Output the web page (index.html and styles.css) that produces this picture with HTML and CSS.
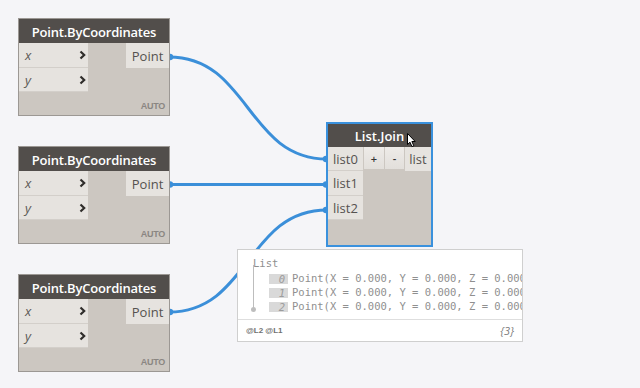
FILE: index.html
```html
<!DOCTYPE html>
<html>
<head>
<meta charset="utf-8">
<link rel="stylesheet" href="styles.css">
</head>
<body>
<div class="canvas">
  <svg class="wires" width="640" height="388" viewBox="0 0 640 388">
    <g fill="none" stroke="#3b8fd9" stroke-width="3">
      <path d="M169 57 C249 57 247 159 327 159"/>
      <path d="M169 184.5 L327 184.5"/>
      <path d="M169 312 C249 312 247 210 327 210"/>
    </g>
    <g fill="#3b8fd9">
      <circle cx="170" cy="57" r="3.2"/>
      <circle cx="170" cy="184.5" r="3.2"/>
      <circle cx="170" cy="312" r="3.2"/>
      <circle cx="326" cy="159" r="3.2"/>
      <circle cx="326" cy="184.5" r="3.2"/>
      <circle cx="326" cy="210" r="3.2"/>
    </g>
  </svg>

  <div class="node n1">
    <div class="head">Point.ByCoordinates</div>
    <div class="body">
      <div class="inputs">
        <div class="in"><span>x</span><svg class="chev" width="7" height="10" viewBox="0 0 7 10"><path d="M1.5 1.5 L5.2 5 L1.5 8.5" fill="none" stroke="#2f2d2b" stroke-width="2.2"/></svg></div>
        <div class="in"><span>y</span><svg class="chev" width="7" height="10" viewBox="0 0 7 10"><path d="M1.5 1.5 L5.2 5 L1.5 8.5" fill="none" stroke="#2f2d2b" stroke-width="2.2"/></svg></div>
      </div>
      <div class="outputs">
        <div class="out">Point</div>
        <div class="auto">AUTO</div>
      </div>
    </div>
  </div>

  <div class="node n2">
    <div class="head">Point.ByCoordinates</div>
    <div class="body">
      <div class="inputs">
        <div class="in"><span>x</span><svg class="chev" width="7" height="10" viewBox="0 0 7 10"><path d="M1.5 1.5 L5.2 5 L1.5 8.5" fill="none" stroke="#2f2d2b" stroke-width="2.2"/></svg></div>
        <div class="in"><span>y</span><svg class="chev" width="7" height="10" viewBox="0 0 7 10"><path d="M1.5 1.5 L5.2 5 L1.5 8.5" fill="none" stroke="#2f2d2b" stroke-width="2.2"/></svg></div>
      </div>
      <div class="outputs">
        <div class="out">Point</div>
        <div class="auto">AUTO</div>
      </div>
    </div>
  </div>

  <div class="node n3">
    <div class="head">Point.ByCoordinates</div>
    <div class="body">
      <div class="inputs">
        <div class="in"><span>x</span><svg class="chev" width="7" height="10" viewBox="0 0 7 10"><path d="M1.5 1.5 L5.2 5 L1.5 8.5" fill="none" stroke="#2f2d2b" stroke-width="2.2"/></svg></div>
        <div class="in"><span>y</span><svg class="chev" width="7" height="10" viewBox="0 0 7 10"><path d="M1.5 1.5 L5.2 5 L1.5 8.5" fill="none" stroke="#2f2d2b" stroke-width="2.2"/></svg></div>
      </div>
      <div class="outputs">
        <div class="out">Point</div>
        <div class="auto">AUTO</div>
      </div>
    </div>
  </div>

  <div class="join">
    <div class="jhead">List.Join</div>
    <div class="jbody">
      <div class="jinputs">
        <div class="jin r0">list0</div>
        <div class="jin r1">list1</div>
        <div class="jin r2">list2</div>
      </div>
      <div class="jbtns">
        <div class="btn plus">+</div>
        <div class="btn minus">-</div>
      </div>
      <div class="jout">list</div>
    </div>
  </div>

  <div class="preview">
    <div class="pv-main">
      <div class="pv-title">List</div>
      <div class="tree">
        <div class="row"><span class="idx">0</span>Point(X = 0.000, Y = 0.000, Z = 0.000)</div>
        <div class="row"><span class="idx">1</span>Point(X = 0.000, Y = 0.000, Z = 0.000)</div>
        <div class="row"><span class="idx">2</span>Point(X = 0.000, Y = 0.000, Z = 0.000)</div>
      </div>
    </div>
    <div class="pv-foot">
      <span class="levels">@L2 @L1</span>
      <span class="count">{3}</span>
    </div>
  </div>

  <svg class="cursor" width="10" height="15" viewBox="0 0 10 15">
    <path d="M0.5 0.5 L0.5 11.5 L3 9.2 L4.9 13.6 L6.8 12.8 L4.9 8.5 L8.2 8.5 Z" fill="#fff" stroke="#000" stroke-width="1" stroke-linejoin="round"/>
  </svg>
</div>
</body>
</html>
```
FILE: styles.css
```css
html, body {
  margin: 0;
  padding: 0;
}
body {
  background: #f5f5f8;
  font-family: "Open Sans", "DejaVu Sans", sans-serif;
}
.canvas {
  position: relative;
  width: 640px;
  height: 388px;
  overflow: hidden;
  background: #f5f5f8;
}
.wires {
  position: absolute;
  left: 0;
  top: 0;
}

/* Point.ByCoordinates nodes */
.node {
  position: absolute;
  left: 18px;
  width: 152px;
  height: 98px;
  box-sizing: border-box;
  border: 1px solid #9c9894;
  background: #ccc7c1;
  display: flex;
  flex-direction: column;
}
.n1 { top: 18px; }
.n2 { top: 146px; }
.n3 { top: 274px; }
.head {
  height: 24px;
  background: #524e4b;
  color: #fff;
  font-size: 13px;
  font-weight: 600;
  letter-spacing: -0.2px;
  display: flex;
  align-items: center;
  justify-content: center;
  padding-top: 1px;
  box-sizing: border-box;
}
.body {
  flex: 1;
  display: flex;
}
.inputs {
  width: 69px;
  display: flex;
  flex-direction: column;
}
.in {
  height: 24px;
  box-sizing: border-box;
  background: #e6e3df;
  border-bottom: 1px solid #d3cfca;
  display: flex;
  align-items: center;
  justify-content: space-between;
  padding: 0 2px 0 6px;
  font-size: 13px;
  font-style: italic;
  color: #5a5754;
}
.in:first-child { height: 25px; }
.chev { display: block; }
.outputs {
  flex: 1;
  display: flex;
  flex-direction: column;
  align-items: flex-end;
}
.out {
  width: 43px;
  height: 25px;
  background: #e6e3df;
  display: flex;
  align-items: center;
  justify-content: center;
  font-size: 13px;
  color: #555250;
}
.auto {
  margin-top: auto;
  margin-bottom: 4px;
  margin-right: 4px;
  font-size: 9px;
  font-weight: 700;
  letter-spacing: -0.3px;
  color: #8a8682;
  font-family: "Liberation Sans", sans-serif;
}

/* List.Join node */
.join {
  position: absolute;
  left: 326px;
  top: 122px;
  width: 107px;
  height: 125px;
  box-sizing: border-box;
  border: 2px solid #3a91dd;
  background: #ccc7c1;
  display: flex;
  flex-direction: column;
}
.jhead {
  height: 23px;
  background: #524e4b;
  color: #fff;
  font-size: 13px;
  font-weight: 600;
  display: flex;
  align-items: center;
  justify-content: center;
}
.jbody {
  flex: 1;
  display: flex;
  align-items: flex-start;
}
.jinputs {
  width: 35px;
  display: flex;
  flex-direction: column;
}
.jin {
  height: 24px;
  box-sizing: border-box;
  background: #e6e3df;
  border-bottom: 1px solid #d3cfca;
  display: flex;
  align-items: center;
  padding-left: 5px;
  font-size: 13px;
  color: #555250;
}
.jin.r1 { height: 25px; }
.jbtns {
  display: flex;
  gap: 1px;
  margin-left: 1px;
}
.btn {
  width: 19px;
  height: 22px;
  background: linear-gradient(#eeebe8, #e2dfdb);
  display: flex;
  align-items: center;
  justify-content: center;
  font-size: 11px;
  font-weight: 600;
  color: #333;
}
.plus { width: 20px; }
.jout {
  margin-left: 1px;
  flex: 1;
  height: 24px;
  background: #e6e3df;
  display: flex;
  align-items: center;
  justify-content: center;
  font-size: 13px;
  color: #555250;
}

/* Preview bubble */
.preview {
  position: absolute;
  left: 237px;
  top: 249px;
  width: 286px;
  height: 93px;
  box-sizing: border-box;
  border: 1px solid #cfcfcf;
  background: #fff;
  display: flex;
  flex-direction: column;
}
.pv-main {
  height: 69px;
  box-sizing: border-box;
  overflow: hidden;
  padding: 6px 0 0 15px;
  font-family: "DejaVu Sans Mono", "Liberation Mono", monospace;
  font-size: 10.5px;
  color: #8f8f8f;
  white-space: nowrap;
}
.pv-title {
  line-height: 14px;
}
.tree {
  position: relative;
  padding-left: 16px;
  padding-top: 1px;
}
.tree::before {
  content: "";
  position: absolute;
  left: 0;
  top: -5px;
  bottom: 3px;
  width: 1px;
  background: #bdbdbd;
}
.tree::after {
  content: "";
  position: absolute;
  left: -2px;
  bottom: 1px;
  width: 5px;
  height: 5px;
  border-radius: 50%;
  background: #bdbdbd;
}
.row {
  line-height: 14px;
  height: 14px;
}
.idx {
  display: inline-block;
  width: 19px;
  height: 10px;
  line-height: 10px;
  box-sizing: border-box;
  padding-right: 3px;
  margin-right: 4px;
  background: #d9d9d9;
  color: #9c9c9c;
  font-style: italic;
  text-align: right;
  vertical-align: -1px;
}
.pv-foot {
  flex: 1;
  border-top: 1px solid #dedede;
  display: flex;
  align-items: center;
  justify-content: space-between;
  padding: 0 8px;
}
.levels {
  font-family: "Liberation Sans", sans-serif;
  font-size: 8px;
  font-weight: 700;
  color: #707070;
}
.count {
  font-family: "Open Sans", sans-serif;
  font-style: italic;
  font-size: 11px;
  color: #7a7a7a;
}

.cursor {
  position: absolute;
  left: 407px;
  top: 133px;
}
```
